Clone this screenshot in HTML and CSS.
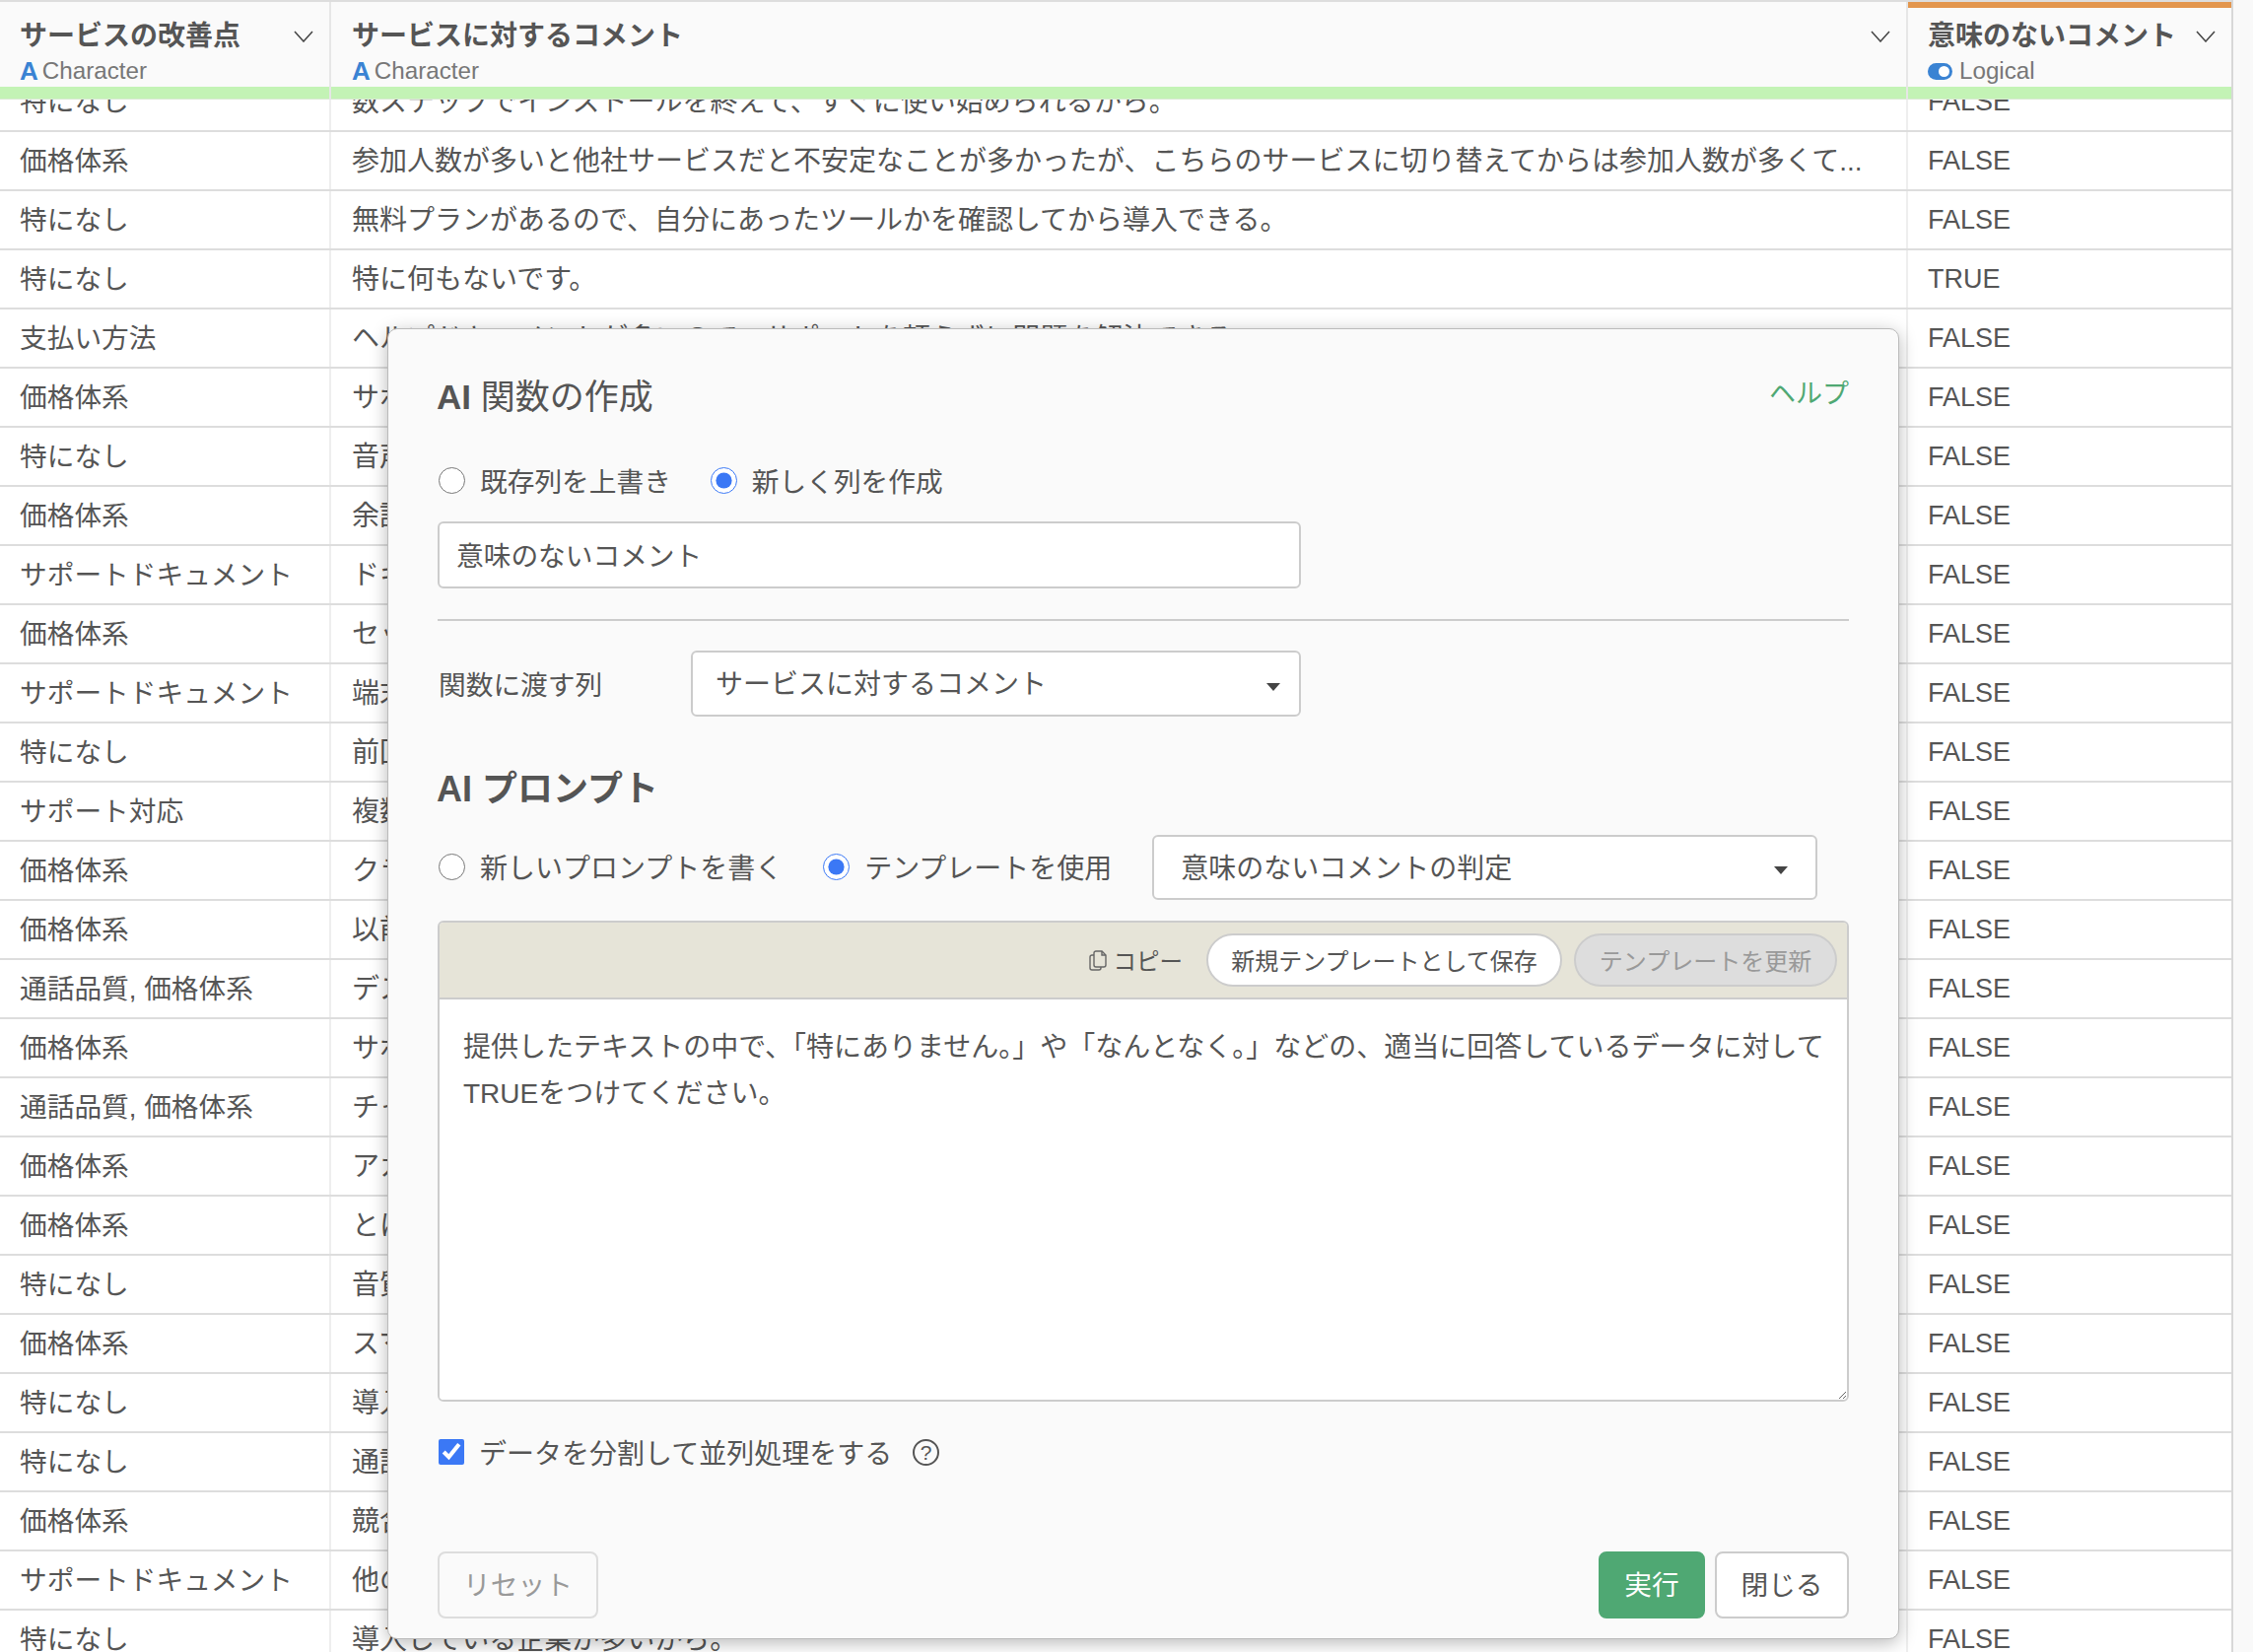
FILE: index.html
```html
<!DOCTYPE html>
<html lang="ja">

<head>
    <title>AI 関数の作成</title>
    <meta charset="utf-8">
    <link rel="stylesheet" href="styles.css">
</head>

<body>

    <section class="table">
        <header class="head">
            <div class="hcell">
                <div class="hbody">
                    <div class="hname"><span>サービスの改善点</span>
                        <svg class="chev" viewBox="0 0 20 12"><path d="M1 1l9 10 9-10"/></svg>
                    </div>
                    <div class="htype"><b class="ico-a">A</b>Character</div>
                </div>
                <div class="quality"></div>
            </div>
            <div class="hcell">
                <div class="hbody">
                    <div class="hname"><span>サービスに対するコメント</span>
                        <svg class="chev" viewBox="0 0 20 12"><path d="M1 1l9 10 9-10"/></svg>
                    </div>
                    <div class="htype"><b class="ico-a">A</b>Character</div>
                </div>
                <div class="quality"></div>
            </div>
            <div class="hcell new">
                <div class="hbody">
                    <div class="hname"><span>意味のないコメント</span>
                        <svg class="chev" viewBox="0 0 20 12"><path d="M1 1l9 10 9-10"/></svg>
                    </div>
                    <div class="htype"><i class="ico-toggle"></i>Logical</div>
                </div>
                <div class="quality"></div>
            </div>
        </header>

        <div class="rows">
            <div class="row"><div>特になし</div><div>数ステップでインストールを終えて、すぐに使い始められるから。</div><div>FALSE</div></div>
            <div class="row"><div>価格体系</div><div>参加人数が多いと他社サービスだと不安定なことが多かったが、こちらのサービスに切り替えてからは参加人数が多くて...</div><div>FALSE</div></div>
            <div class="row"><div>特になし</div><div>無料プランがあるので、自分にあったツールかを確認してから導入できる。</div><div>FALSE</div></div>
            <div class="row"><div>特になし</div><div>特に何もないです。</div><div>TRUE</div></div>
            <div class="row"><div>支払い方法</div><div>ヘルプドキュメントが多いので、サポートを頼らずに問題を解決できる。</div><div>FALSE</div></div>
            <div class="row"><div>価格体系</div><div>サポ</div><div>FALSE</div></div>
            <div class="row"><div>特になし</div><div>音声</div><div>FALSE</div></div>
            <div class="row"><div>価格体系</div><div>余計</div><div>FALSE</div></div>
            <div class="row"><div>サポートドキュメント</div><div>ドキ</div><div>FALSE</div></div>
            <div class="row"><div>価格体系</div><div>セッ</div><div>FALSE</div></div>
            <div class="row"><div>サポートドキュメント</div><div>端末</div><div>FALSE</div></div>
            <div class="row"><div>特になし</div><div>前回</div><div>FALSE</div></div>
            <div class="row"><div>サポート対応</div><div>複数</div><div>FALSE</div></div>
            <div class="row"><div>価格体系</div><div>クラ</div><div>FALSE</div></div>
            <div class="row"><div>価格体系</div><div>以前</div><div>FALSE</div></div>
            <div class="row"><div>通話品質, 価格体系</div><div>デス</div><div>FALSE</div></div>
            <div class="row"><div>価格体系</div><div>サポ</div><div>FALSE</div></div>
            <div class="row"><div>通話品質, 価格体系</div><div>チャ</div><div>FALSE</div></div>
            <div class="row"><div>価格体系</div><div>アカ</div><div>FALSE</div></div>
            <div class="row"><div>価格体系</div><div>とに</div><div>FALSE</div></div>
            <div class="row"><div>特になし</div><div>音質</div><div>FALSE</div></div>
            <div class="row"><div>価格体系</div><div>スマ</div><div>FALSE</div></div>
            <div class="row"><div>特になし</div><div>導入</div><div>FALSE</div></div>
            <div class="row"><div>特になし</div><div>通話</div><div>FALSE</div></div>
            <div class="row"><div>価格体系</div><div>競合</div><div>FALSE</div></div>
            <div class="row"><div>サポートドキュメント</div><div>他の</div><div>FALSE</div></div>
            <div class="row"><div>特になし</div><div>導入している企業が多いから。</div><div>FALSE</div></div>
        </div>
    </section>

    <section class="modal">
        <div class="modal-top">
            <h2><b>AI</b> 関数の作成</h2>
            <a class="help">ヘルプ</a>
        </div>

        <div class="radios top-radios">
            <label><input type="radio" name="mode">既存列を上書き</label>
            <label><input type="radio" name="mode" checked>新しく列を作成</label>
        </div>

        <input class="field name-field" type="text" value="意味のないコメント">

        <hr>

        <div class="pick">
            <span class="pick-label">関数に渡す列</span>
            <div class="select pick-select">サービスに対するコメント</div>
        </div>

        <h3>AI プロンプト</h3>

        <div class="prompt-row">
            <div class="radios">
                <label><input type="radio" name="prompt">新しいプロンプトを書く</label>
                <label><input type="radio" name="prompt" checked>テンプレートを使用</label>
            </div>
            <div class="select tmpl-select">意味のないコメントの判定</div>
        </div>

        <div class="editor">
            <div class="toolbar">
                <span class="copy">
                    <svg viewBox="0 0 18 21"><path d="M5 5H3a2 2 0 0 0-2 2v11a2 2 0 0 0 2 2h7a2 2 0 0 0 2-2v-1"/><path d="M7 1h6l4 4v10a2 2 0 0 1-2 2H7a2 2 0 0 1-2-2V3a2 2 0 0 1 2-2z"/><path d="M13 1v4h4"/></svg>
                    コピー
                </span>
                <button class="pill save">新規テンプレートとして保存</button>
                <button class="pill off">テンプレートを更新</button>
            </div>
            <textarea>提供したテキストの中で、「特にありません。」や「なんとなく。」などの、適当に回答しているデータに対してTRUEをつけてください。</textarea>
        </div>

        <label class="check"><input type="checkbox" checked>データを分割して並列処理をする<span class="q">?</span></label>

        <footer class="actions">
            <button class="btn reset">リセット</button>
            <div class="actions-right">
                <button class="btn run">実行</button>
                <button class="btn close">閉じる</button>
            </div>
        </footer>
    </section>

</body>

</html>
```

FILE: styles.css
```css
html, body {
    margin: 0;
    height: 1676px;
    overflow: hidden;
}

body {
    background: #f9f9f9;
    font-family: "Liberation Sans", "Noto Sans CJK JP", sans-serif;
    font-size: 27.7px;
    color: #555;
}

.table {
    width: 2266px;
    border-right: 2px solid #d8d8d8;
    box-sizing: border-box;
    height: 1676px;
    overflow: hidden;
    background: white;
}

.head {
    position: relative;
    z-index: 1;
    display: grid;
    grid-template-columns: 336px 1600px 328px;
    border-top: 2px solid #ddd;
}

.hcell {
    background: #fafafa;
    border-right: 2px solid #e6e6e6;
    display: flex;
    flex-direction: column;
    height: 99px;
}

.hcell:last-child {
    border-right: 0;
}

.hbody {
    flex: 1;
    padding: 14px 16px 0 21px;
}

.hcell:first-child .hbody,
.new .hbody {
    padding-left: 20px;
}

.new .hbody {
    border-top: 6px solid #e3964d;
    padding-top: 8px;
}

.hname {
    display: flex;
    justify-content: space-between;
    align-items: center;
    height: 36px;
    font-size: 28px;
    font-weight: bold;
}

.chev {
    width: 20px;
    height: 12px;
    fill: none;
    stroke: #444;
    stroke-width: 1.5;
    margin-top: 5px;
}

.htype {
    display: flex;
    align-items: center;
    height: 32px;
    margin-top: 4px;
    font-size: 24.2px;
    color: #777;
}

.ico-a {
    font-size: 26px;
    color: #3a83d3;
    margin-right: 4px;
}

.ico-toggle {
    position: relative;
    width: 25px;
    height: 17px;
    border-radius: 9px;
    background: #3a83d3;
    margin-right: 7px;
}

.ico-toggle::after {
    content: "";
    position: absolute;
    right: 3px;
    top: 3px;
    width: 11px;
    height: 11px;
    border-radius: 50%;
    background: white;
}

.quality {
    height: 13px;
    background: #c3f3b5;
    border-bottom: 1px solid #d9ead3;
    box-sizing: border-box;
}

.rows {
    margin-top: -27px;
}

.row {
    display: grid;
    grid-template-columns: 336px 1600px 328px;
    height: 60px;
    box-sizing: border-box;
    border-bottom: 2px solid #ddd;
    line-height: 59px;
}

.row div {
    padding-left: 20px;
    border-right: 2px solid #eee;
    white-space: nowrap;
    overflow: hidden;
}

.row div:nth-child(2) {
    padding-left: 21px;
    font-size: 28px;
}

.row div:last-child {
    border-right: 0;
    font-size: 27px;
}

.modal {
    position: absolute;
    left: 393px;
    top: 333px;
    width: 1534px;
    height: 1330px;
    box-sizing: border-box;
    padding: 43px 50px 0;
    background: #fafafa;
    border: 1px solid #bbb;
    border-radius: 10px;
    box-shadow: 0 4px 18px rgba(0, 0, 0, .28);
}

.modal-top {
    display: flex;
    justify-content: space-between;
    align-items: center;
    height: 48px;
}

h2 {
    margin: 4px 0 0 -1px;
    font-size: 35px;
    font-weight: normal;
    line-height: 48px;
}

.help {
    font-size: 27px;
    color: #4fa873;
    margin-top: -8px;
}

.radios {
    display: flex;
    gap: 40px;
    white-space: nowrap;
}

.radios label {
    display: flex;
    align-items: center;
}

.top-radios {
    margin-top: 39px;
    height: 46px;
    gap: 39px;
}

input[type="radio"] {
    width: 27px;
    height: 27px;
    margin: 0 15px 0 1px;
    accent-color: #3b78f5;
}

.field {
    display: block;
    box-sizing: border-box;
    border: 2px solid #ccc;
    border-radius: 6px;
    background: white;
    font: inherit;
    color: #555;
}

.name-field {
    width: 876px;
    height: 68px;
    margin-top: 19px;
    padding: 0 17px 3px;
}

hr {
    height: 2px;
    border: 0;
    background: #ccc;
    margin: 31px 0 30px;
}

.select {
    position: relative;
    box-sizing: border-box;
    border: 2px solid #ccc;
    border-radius: 6px;
    background: white;
    display: flex;
    align-items: center;
    white-space: nowrap;
    font-size: 28px;
    padding-bottom: 3px;
}

.select::after {
    content: "";
    position: absolute;
    top: 50%;
    margin-top: -1px;
    right: 19px;
    border-top: 8px solid #444;
    border-left: 7px solid transparent;
    border-right: 7px solid transparent;
}

.pick {
    display: flex;
    align-items: center;
    height: 67px;
}

.pick-label {
    width: 257px;
    padding-left: 1px;
    box-sizing: border-box;
    margin-top: -1px;
}

.pick-select {
    width: 619px;
    height: 67px;
    padding-left: 23px;
}

h3 {
    margin: 50px 0 0 -1px;
    font-size: 36px;
    line-height: 48px;
}

.prompt-row {
    display: flex;
    align-items: center;
    margin-top: 22px;
    height: 66px;
}

.prompt-row .radios {
    font-size: 28px;
    margin-top: -2px;
}

.tmpl-select {
    width: 675px;
    height: 66px;
    padding-left: 27px;
    margin-left: 41px;
}

.tmpl-select::after {
    right: 28px;
}

.editor {
    margin-top: 21px;
    height: 488px;
    box-sizing: border-box;
    border: 2px solid #ccc;
    border-radius: 6px;
    display: flex;
    flex-direction: column;
    overflow: hidden;
}

.toolbar {
    flex: none;
    height: 78px;
    box-sizing: border-box;
    border-bottom: 2px solid #ccc;
    background: #e6e4d8;
    display: flex;
    justify-content: flex-end;
    align-items: center;
    gap: 12px;
    padding-right: 10px;
    font-size: 24px;
}

.copy {
    display: flex;
    align-items: center;
    gap: 7px;
    margin-right: 12px;
    font-size: 23.5px;
}

.copy svg {
    width: 18px;
    height: 21px;
    fill: none;
    stroke: #666;
    stroke-width: 1.4;
}

.pill {
    height: 54px;
    box-sizing: border-box;
    border: 2px solid #ccc;
    border-radius: 27px;
    font: inherit;
    color: #555;
    background: white;
    padding: 0 23px 2px;
}

.save {
    width: 361px;
}

.off {
    width: 267px;
    background: #ddd;
    color: #999;
}

textarea {
    flex: 1;
    display: block;
    border: 0;
    background: white;
    font: inherit;
    font-size: 28px;
    line-height: 47px;
    color: #555;
    padding: 25px 20px 25px 24px;
    resize: vertical;
    outline: 0;
}

.check {
    display: flex;
    align-items: center;
    margin-top: 37px;
    height: 28px;
    font-size: 28px;
}

input[type="checkbox"] {
    width: 26px;
    height: 26px;
    margin: 0 15px 0 1px;
    accent-color: #3b78f5;
}

.q {
    width: 27px;
    height: 27px;
    box-sizing: border-box;
    margin-left: 21px;
    border: 2px solid #555;
    border-radius: 50%;
    font-size: 21px;
    line-height: 23px;
    text-align: center;
}

.actions {
    display: flex;
    justify-content: space-between;
    margin-top: 87px;
}

.actions-right {
    display: flex;
    gap: 10px;
}

.btn {
    height: 68px;
    box-sizing: border-box;
    border: 2px solid #ccc;
    border-radius: 8px;
    background: white;
    font: inherit;
    color: #555;
    padding: 0 0 5px;
}

.reset {
    width: 163px;
    border-color: #ddd;
    background: #fafafa;
    color: #999;
}

.run {
    width: 108px;
    border-color: #4fa873;
    background: #4fa873;
    color: white;
}

.close {
    width: 136px;
}
```
